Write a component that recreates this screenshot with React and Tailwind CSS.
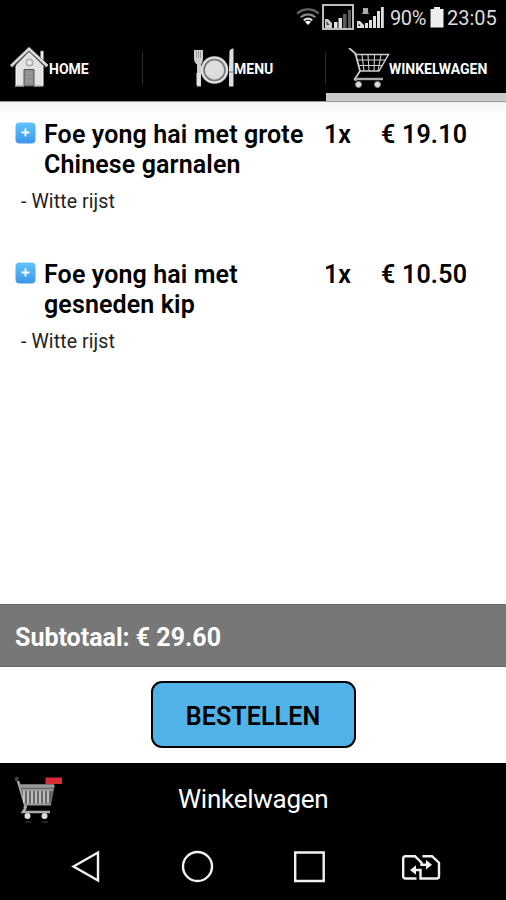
import React from 'react';

const items = [
    { id: 1, name: ['Foe yong hai met grote', 'Chinese garnalen'], qty: 1, price: '19.10', extra: 'Witte rijst' },
    { id: 2, name: ['Foe yong hai met', 'gesneden kip'], qty: 1, price: '10.50', extra: 'Witte rijst' },
];

const WifiIcon = () => (
    <svg width="24" height="20" viewBox="0 0 24 20" fill="none" strokeWidth="2.2">
        <path d="M1.2 6.6C7.5 1 16.5 1 22.8 6.6" stroke="#666" />
        <path d="M4.6 10.2C9 6.3 15 6.3 19.4 10.2" stroke="#888" />
        <path d="M7.8 13.4C10.4 11.2 13.6 11.2 16.2 13.4" stroke="#ddd" />
        <path d="M9 14.8Q12 12.6 15 14.8L12 18Z" fill="#fff" />
    </svg>
);

const RoamingSignal = () => (
    <svg width="32" height="26" viewBox="0 0 32 26">
        <rect x="1" y="1" width="30" height="24" fill="#000" stroke="#bdbdbd" strokeWidth="2" />
        <path d="M3 15h3l4 4v5H3z" fill="#ccc" />
        <path d="M4.500 17l3 4h-3z" fill="#444" />
        <path d="M12 18h3.500v6H12zM16.500 14H20v10h-3.500z" fill="#e2e2e2" />
        <path d="M21 10h3.500v14H21zM26 6h3v18h-3z" fill="#5d5d5d" />
    </svg>
);

const SimSignal = () => (
    <svg width="27" height="22" viewBox="0 0 27 22" fill="#e0e0e0">
        <path d="M6 1h5v4l1 2H5l1-2z" fill="#aaa" />
        <path d="M0 14h3l4 4v3H0z" />
        <path d="M1.500 16l2 3h-2z" fill="#222" />
        <path d="M8 16h3v5H8zM12 13h3v8h-3zM16 9h3v12h-3zM20 4h3v17h-3zM24 0h2.800v21H24z" />
    </svg>
);

const BatteryIcon = () => (
    <svg width="14" height="21" viewBox="0 0 14 21" fill="#eee">
        <path d="M4 0h6v2h3.500v18.500H.500V2H4z" />
    </svg>
);

const HouseIcon = () => (
    <svg width="39" height="41" viewBox="0 0 39 41">
        <path d="M30.500 4h3v10l-3-3z" fill="#eee" stroke="#777" strokeWidth=".6" />
        <path d="M6 18L19.500 4 33 18v21H6z" fill="#e3e3e3" />
        <path d="M6 19v20M33 19v20" stroke="#fff" />
        <path d="M1 19.500L19 2L37 19.500" fill="none" stroke="#555" strokeWidth="4" />
        <path d="M1 19L19 1.800L37.500 19" fill="none" stroke="#ddd" strokeWidth="2.400" />
        <circle cx="19.500" cy="15.500" r="3.200" fill="#e8e8e8" stroke="#aaa" strokeWidth="1.400" />
        <path d="M14 39V22.500h10V39z" fill="#8f8f8f" stroke="#555" />
        <path d="M16 26h6M16 30h6M16 34h6" stroke="#aaa" strokeWidth=".7" />
        <path d="M5 39h9M24 39h9" stroke="#aaa" strokeWidth="1.500" />
    </svg>
);

const DinnerIcon = () => (
    <svg width="42" height="42" viewBox="0 0 42 42">
        <path d="M0 2h9v8Q9 14.500 7 16.500v22H3v-22Q0 14.500 0 10z" fill="#cfcfcf" />
        <path d="M2.500 3v7M4.500 3v7M6.500 3v7" stroke="#888" strokeWidth=".7" />
        <path d="M2.500 25h4v12h-4z" fill="#e5e5e5" />
        <path d="M35.500 3q1-3 4-2.500v38h-4.500V19z" fill="#ddd" />
        <path d="M35 24h4.500" stroke="#777" />
        <circle cx="20.500" cy="22" r="13.800" fill="#ddd" />
        <circle cx="20.500" cy="22" r="10.500" fill="#d6d6d6" stroke="#777" strokeWidth="1.600" />
        <circle cx="20.500" cy="22" r="8.500" fill="#dedede" />
    </svg>
);

const CartIcon = () => (
    <svg width="42" height="41" viewBox="0 0 42 41" fill="none" stroke="#ccc">
        <path d="M1 0l6.500 5.500L12 23l-4.500 7q-2 2 1 2" strokeWidth="1.800" />
        <path d="M6.500 6.500H40.500L31 23H11.500" strokeWidth="1.500" />
        <path d="M8.500 12H37M10 17.500h24M14 7l2 16M20 7l1 16M26.500 7L26 23M33 7l-3 16" strokeWidth="1.100" />
        <path d="M7 31h28" strokeWidth="2.400" stroke="#aaa" />
        <g fill="#ddd" stroke="#888">
            <circle cx="10.500" cy="36.500" r="3" />
            <circle cx="29.500" cy="36.500" r="3" />
        </g>
    </svg>
);

const RemoveCartIcon = () => (
    <svg width="48" height="50" viewBox="0 0 48 50" fill="none">
        <path d="M0 2l3 2" stroke="#444" strokeWidth="4" />
        <path d="M3 5l8 27" stroke="#aaa" strokeWidth="2.500" />
        <path d="M5 9h35l-4 20H10z" fill="#666" />
        <path d="M4 10h35" stroke="#999" strokeWidth="3.500" />
        <path d="M9 15v12M13 15v13M17 15v13M21 15v13M25 15v13M29 15v13M33 15v12" stroke="#ccc" strokeWidth="1.700" />
        <path d="M7 14h31M9 28.500h27" stroke="#999" strokeWidth="1.800" />
        <path d="M10 30v3l-2 3h27" stroke="#aaa" strokeWidth="2.700" />
        <circle cx="12.500" cy="40" r="3" fill="#ddd" />
        <circle cx="29.500" cy="40" r="3" fill="#ddd" />
        <path d="M10 46h6M27 46h6" stroke="#222" strokeWidth="2" />
        <rect x="30.500" y="1.500" width="16.500" height="6.500" fill="#d92c32" />
    </svg>
);

const PlusIcon = () => (
    <svg width="21" height="22" viewBox="0 0 21 22" className="mt-px shrink-0">
        <defs>
            <linearGradient id="plusBlue" x1="0" y1="0" x2="0" y2="1">
                <stop offset="0" stopColor="#62c3fb" />
                <stop offset="1" stopColor="#3c97ea" />
            </linearGradient>
        </defs>
        <rect x=".5" y=".5" width="20" height="21" rx="4" fill="url(#plusBlue)" />
        <path d="M10.500 6.500v8M6.500 10.500h8" stroke="#fff" strokeWidth="1.800" />
    </svg>
);

const SwapSimIcon = () => (
    <svg width="40" height="28" viewBox="0 0 40 28" fill="none" stroke="#f2f2f2" strokeWidth="2.400">
        <path d="M15.500 24.500H4.500Q2.200 24.500 2.200 22.200V4.500Q2.200 2.200 4.500 2.200H14l6.500 6.500v2H27" />
        <path d="M21.500 2.200H31l7 6.500V22.200q0 2.300-2.300 2.300H19.500V16H13" />
        <path d="M25 6l6 4.700-6 4.700zM15 11.300L9 16l6 4.700z" fill="#f2f2f2" stroke="none" />
    </svg>
);

const Tab = ({ icon, label, active, className }) => (
    <div className={`relative flex h-full ${className}`}>
        {icon}
        <span className="mt-[24px] text-[14px] leading-[18px] font-bold text-white">{label}</span>
        {active && <div className="absolute inset-x-0 bottom-0 h-2 bg-[#cbcbcb]" />}
    </div>
);

const CartRow = ({ item }) => (
    <div className="h-[140px] pt-[18px] pl-[15px]">
        <div className="flex items-start text-[25px] leading-[29.5px] font-semibold">
            <div className="pt-px"><PlusIcon /></div>
            <div className="ml-2 w-[280px] whitespace-nowrap tracking-[0.12px]">
                {item.name.map((line) => (
                    <div key={line}>{line}</div>
                ))}
            </div>
            <div className="w-[57px]">{item.qty}x</div>
            <div className="tracking-[0.2px] whitespace-nowrap">€ {item.price}</div>
        </div>
        <div className="mt-[11px] pl-[6px] text-[19.5px] leading-6 tracking-[0.1px] text-[#222]">- {item.extra}</div>
    </div>
);

export default function App() {
    return (
        <div className="flex h-[900px] w-[506px] flex-col overflow-hidden bg-white font-['Roboto',sans-serif] text-black">
            <div className="flex h-9 items-start bg-black pl-[296px] text-[20px] leading-6 text-[#ddd]">
                <div className="mt-[7px] w-[26px]"><WifiIcon /></div>
                <div className="mt-[4px] w-[35px]"><RoamingSignal /></div>
                <div className="mt-[7px] w-[33px]"><SimSignal /></div>
                <span className="mt-[6px] w-[40px] tracking-[-0.4px]">90%</span>
                <div className="mt-[7px] w-[17px]"><BatteryIcon /></div>
                <span className="mt-[6px]">23:05</span>
            </div>

            <div className="flex h-[65px] shrink-0 items-start bg-black">
                <Tab className="w-[142px] pl-[10px]" icon={<div className="mt-[11px] w-[39px]"><HouseIcon /></div>} label="HOME" />
                <div className="mt-4 h-[33px] w-px bg-[#2b2b2b]" />
                <Tab className="w-[182px] pl-[51px]" icon={<div className="mt-[12px] w-[40px]"><DinnerIcon /></div>} label="MENU" />
                <div className="mt-4 h-[33px] w-px bg-[#2b2b2b]" />
                <Tab className="w-[180px] pl-[22px]" icon={<div className="mt-[12px] w-[41px]"><CartIcon /></div>} label="WINKELWAGEN" active />
            </div>

            <div className="h-[503px] shrink-0 bg-linear-to-b from-[#f4f4f4] to-white to-[14px] border-t border-[#999]">
                {items.map((item) => (
                    <CartRow key={item.id} item={item} />
                ))}
            </div>

            <div className="flex h-[63px] shrink-0 items-center border-y border-[#686868] bg-[#777] pt-1 pl-[15px] text-[25px] font-bold text-white">
                Subtotaal: € 29.60
            </div>

            <div className="flex h-[96px] shrink-0 items-start justify-center pt-[14px]">
                <button className="h-[67px] w-[205px] rounded-[11px] border-2 border-black bg-[#50b2e6] pt-[4px] text-[25px] font-semibold tracking-[0.1px]">
                    BESTELLEN
                </button>
            </div>

            <div className="flex h-[72px] shrink-0 bg-black text-white">
                <div className="mt-[13px] ml-[15px] w-[163px]"><RemoveCartIcon /></div>
                <span className="mt-[20px] text-[26px] leading-8 tracking-[-0.25px]">Winkelwagen</span>
            </div>

            <div className="flex h-[65px] shrink-0 items-start bg-black pt-[15px] pl-[71px]">
                <svg width="110" height="34" viewBox="0 0 110 34" fill="none" stroke="#f2f2f2" strokeWidth="2.400">
                    <path d="M2.500 16.500L27 2.500v28z" />
                </svg>
                <svg width="112" height="34" viewBox="0 0 112 34" fill="none" stroke="#f2f2f2" strokeWidth="2.400">
                    <circle cx="16.500" cy="16.500" r="14.500" />
                </svg>
                <svg width="108" height="34" viewBox="0 0 108 34" fill="none" stroke="#f2f2f2" strokeWidth="2.400">
                    <path d="M2.200 2.500h28.500v28.500H2.200z" />
                </svg>
                <div className="mt-[4px]"><SwapSimIcon /></div>
            </div>
        </div>
    );
}
